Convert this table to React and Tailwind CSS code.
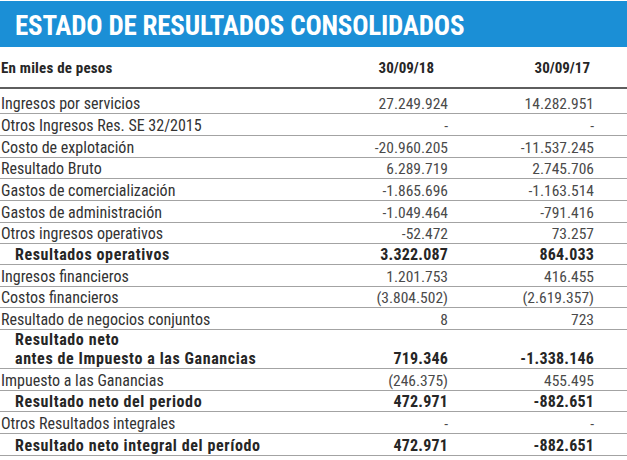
const rows = [
  { label: 'Ingresos por servicios', a: '27.249.924', b: '14.282.951', h: 'h-[25px]' },
  { label: 'Otros Ingresos Res. SE 32/2015', a: '-', b: '-', h: 'h-[22px]' },
  { label: 'Costo de explotación', a: '-20.960.205', b: '-11.537.245', h: 'h-[22px]' },
  { label: 'Resultado Bruto', a: '6.289.719', b: '2.745.706', h: 'h-[21px]' },
  { label: 'Gastos de comercialización', a: '-1.865.696', b: '-1.163.514', h: 'h-[22px]' },
  { label: 'Gastos de administración', a: '-1.049.464', b: '-791.416', h: 'h-[22px]' },
  { label: 'Otros ingresos operativos', a: '-52.472', b: '73.257', h: 'h-[21px]' },
  { label: 'Resultados operativos', a: '3.322.087', b: '864.033', h: 'h-[21px]', bold: true },
  { label: 'Ingresos financieros', a: '1.201.753', b: '416.455', h: 'h-[22px]' },
  { label: 'Costos financieros', a: '(3.804.502)', b: '(2.619.357)', h: 'h-[21px]' },
  { label: 'Resultado de negocios conjuntos', a: '8', b: '723', h: 'h-[22px]' },
  { label: ['Resultado neto', 'antes de Impuesto a las Ganancias'], a: '719.346', b: '-1.338.146', h: 'h-[39px]', bold: true },
  { label: 'Impuesto a las Ganancias', a: '(246.375)', b: '455.495', h: 'h-[22px]' },
  { label: 'Resultado neto del periodo', a: '472.971', b: '-882.651', h: 'h-[21px]', bold: true },
  { label: 'Otros Resultados integrales', a: '-', b: '-', h: 'h-[22px]' },
  { label: 'Resultado neto integral del período', a: '472.971', b: '-882.651', h: 'h-[22px]', bold: true },
];

function Row({ row }) {
  const multi = Array.isArray(row.label);
  const num = row.bold
    ? 'text-right font-bold text-[#262626] tracking-[0.2px] text-[16px] leading-[18px]'
    : 'text-right text-[#4a4a4a] text-[15.5px] leading-[18px]';
  return (
    <div className={`grid grid-cols-[308px_140px_146px_33px] items-end border-b border-[#a3a3a3] ${row.h}`}>
      {row.bold ? (
        <div className="pl-[15px] font-bold text-[16px] leading-[18.5px] tracking-[0.6px] text-[#262626]">
          {multi ? (
            <>
              <div>{row.label[0]}</div>
              <div>{row.label[1]}</div>
            </>
          ) : (
            row.label
          )}
        </div>
      ) : (
        <div className="pl-px text-[16px] leading-[18px] text-[#333]">{row.label}</div>
      )}
      <div className={num}>{row.a}</div>
      <div className={num}>{row.b}</div>
      <div />
    </div>
  );
}

export default function App() {
  return (
    <div className="w-[627px] h-[460px] bg-white font-['Roboto_Condensed',Roboto,sans-serif] overflow-hidden">
      <div className="mt-px h-[46px] bg-[#1b8fd6] flex items-center pl-[15px]">
        <h1 className="text-white font-bold text-[27px] tracking-[-0.2px] leading-none pt-[5px]">
          ESTADO DE RESULTADOS CONSOLIDADOS
        </h1>
      </div>

      <div className="grid grid-cols-[308px_126px_156px_37px] items-center h-[42px] pt-[3px] border-b-2 border-[#5e5e5e] text-[15px] font-bold text-[#262626]">
        <div className="pl-px tracking-[0.2px]">En miles de pesos</div>
        <div className="text-right">30/09/18</div>
        <div className="text-right">30/09/17</div>
        <div />
      </div>

      {rows.map((row, i) => (
        <Row key={i} row={row} />
      ))}
    </div>
  );
}
